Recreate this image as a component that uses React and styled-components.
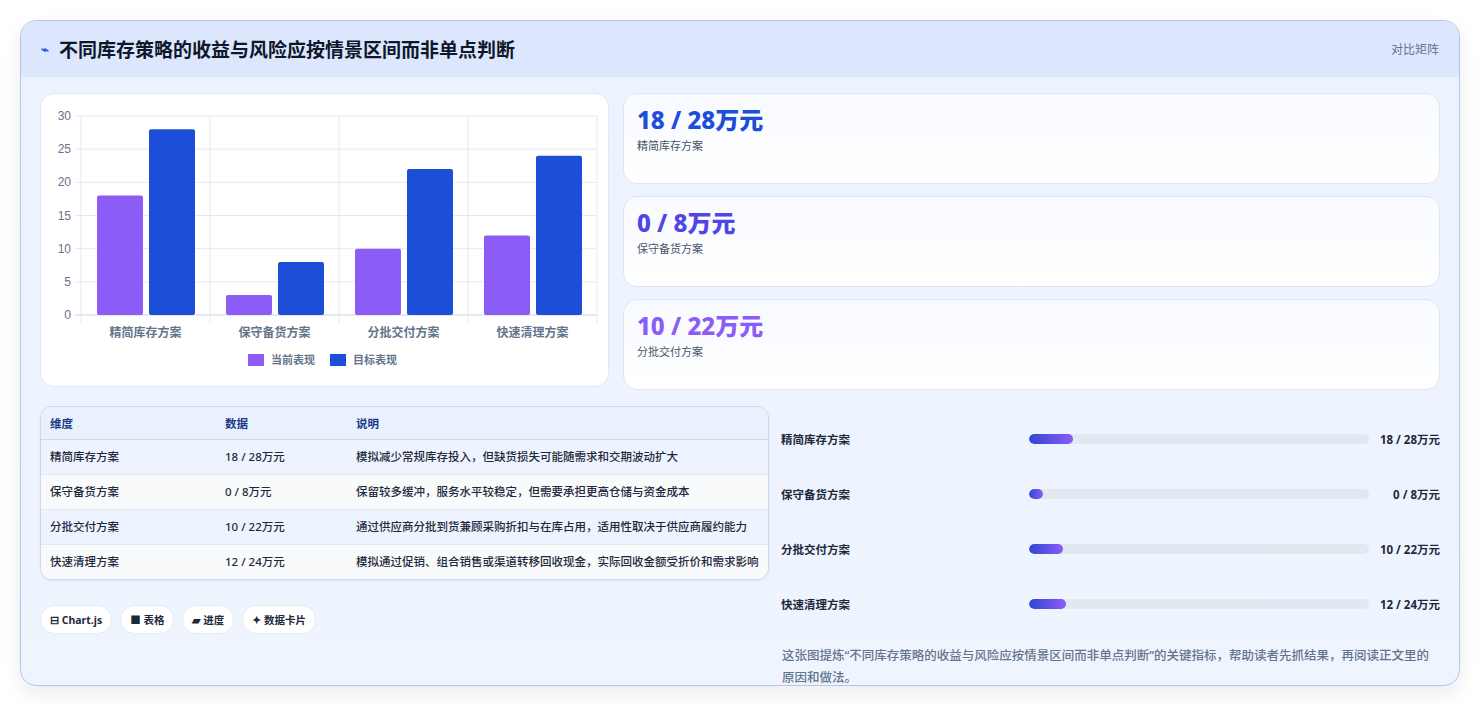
import React from "react";
import styled, { createGlobalStyle } from "styled-components";

const Global = createGlobalStyle`
  body { margin: 0; background: #fff; font-family: "Noto Sans", "Noto Sans CJK SC", sans-serif; }
`;
const Page = styled.div`padding: 20px 20px 20px 20px; height: 706px; box-sizing: border-box;`;
const Shell = styled.div`
  border: 1px solid #b7c3ec; border-radius: 16px; overflow: hidden;
  background: linear-gradient(180deg, #ecf2ff, #eff5ff);
  box-shadow: 0 8px 20px rgba(15,23,42,0.08);
  height: 666px; box-sizing: border-box;
`;
const Header = styled.div`
  height: 56px; background: #dce7fd; display: flex; align-items: center;
  justify-content: space-between; padding: 0 20px;
`;
const Title = styled.h1`
  margin: 0; font-size: 19px; font-weight: 700; color: #0f172a; display: flex; align-items: center; gap: 10px;
  span { color: #2b4fd8; font-size: 13px; }
`;
const Tag = styled.div`font-size: 12px; color: #64748b;`;
const Body = styled.div`padding: 16px 19px 0 19px; display: flex; flex-direction: column;`;
const TopRow = styled.div`display: grid; grid-template-columns: 569px 1fr; gap: 14px;`;
const ChartCard = styled.div`
  background: #fff; border: 1px solid #e1e8f5; border-radius: 14px; height: 294px; box-sizing: border-box;
`;
const Cards = styled.div`display: flex; flex-direction: column; gap: 12px;`;
const Stat = styled.div`
  height: 91px; box-sizing: border-box; border: 1px solid #dde6f6; border-radius: 14px;
  background: linear-gradient(180deg, #f8faff, #fff); padding: 10px 13px;
`;
const StatValue = styled.div`font-size: 24px; font-weight: 800; color: ${p => p.c}; line-height: 32px;`;
const StatLabel = styled.div`font-size: 11px; color: #475569; margin-top: 1px;`;
const BottomRow = styled.div`display: grid; grid-template-columns: 729px 1fr; gap: 12px; margin-top: 16px;`;
const Left = styled.div`display: flex; flex-direction: column;`;
const Table = styled.table`
  width: 100%; border-collapse: separate; border-spacing: 0; font-size: 11.5px; color: #1e293b;
  border: 1px solid #cdd7ee; border-radius: 12px; overflow: hidden;
  box-shadow: 0 1px 3px rgba(15,23,42,0.06);
  th { text-align: left; font-weight: 700; color: #1e3a8a; background: #eaf1fe; height: 32px; padding: 0 9px; border-bottom: 1px solid #cfd9ee; }
  td { padding: 8px 9px; line-height: 18px; vertical-align: top; border-bottom: 1px solid #e2e8f0; font-weight: 500; }
  tr:nth-child(odd) td { background: #eef4ff; }
  tr:nth-child(even) td { background: #f8fafc; }
  tr:last-child td { border-bottom: none; }
`;
const Chips = styled.div`display: flex; gap: 8px; margin-top: 25px;`;
const Chip = styled.div`
  height: 27px; padding: 0 9px; border-radius: 14px; background: #fff; border: 1px solid #e5eaf3;
  font-size: 10.5px; font-weight: 700; color: #1e293b; display: flex; align-items: center; gap: 3px;
`;
const Right = styled.div`display: flex; flex-direction: column; padding-top: 5px;`;
const PRow = styled.div`
  height: 55px; display: grid; grid-template-columns: 248px 340px 1fr; align-items: center;
  font-size: 11.5px; font-weight: 700; color: #1e293b;
`;
const Track = styled.div`height: 10px; border-radius: 5px; background: #e2e8f0; overflow: hidden;`;
const Fill = styled.div`height: 100%; border-radius: 5px; background: linear-gradient(90deg, #3146d6, #8b5cf6);`;
const PVal = styled.div`text-align: right;`;
const Caption = styled.p`margin: 14px 0 0 1px; font-size: 12.5px; line-height: 22px; color: #64748b; font-weight: 500;`;

const cats = ["精简库存方案", "保守备货方案", "分批交付方案", "快速清理方案"];
const cur = [18, 3, 10, 12];
const tgt = [28, 8, 22, 24];

function Chart() {
  const x0 = 40, x1 = 556, y0 = 221, k = 199 / 30, w = 129;
  return (
    <svg width="567" height="292" style={{ display: "block" }}>
      {[0, 5, 10, 15, 20, 25, 30].map(v => (
        <g key={v}>
          <line x1={x0 - 6} x2={x1} y1={y0 - v * k} y2={y0 - v * k} stroke={v === 0 ? "#cbd5e1" : "#e5e9f0"} />
          <text x={30} y={y0 - v * k + 4} fontSize="12" fill="#64748b" textAnchor="end" fontFamily="Liberation Sans">{v}</text>
        </g>
      ))}
      {[0, 1, 2, 3, 4].map(i => (
        <line key={i} x1={x0 + i * w} x2={x0 + i * w} y1={22} y2={y0 + 8} stroke="#e5e9f0" />
      ))}
      {cats.map((c, i) => (
        <g key={c}>
          <rect x={x0 + i * w + 16} y={y0 - cur[i] * k} width={46} height={cur[i] * k} rx="2" fill="#8b5cf6" />
          <rect x={x0 + i * w + 68} y={y0 - tgt[i] * k} width={46} height={tgt[i] * k} rx="2" fill="#1d4ed8" />
          <text x={x0 + i * w + w / 2} y={243} fontSize="12" fontWeight="700" fill="#64748b" textAnchor="middle">{c}</text>
        </g>
      ))}
      <rect x={207} y={260} width={16} height={12} fill="#8b5cf6" />
      <text x={230} y={270} fontSize="11" fontWeight="700" fill="#64748b">当前表现</text>
      <rect x={289} y={260} width={16} height={12} fill="#1d4ed8" />
      <text x={312} y={270} fontSize="11" fontWeight="700" fill="#64748b">目标表现</text>
    </svg>
  );
}

const rows = [
  ["精简库存方案", "18 / 28万元", "模拟减少常规库存投入，但缺货损失可能随需求和交期波动扩大", 13],
  ["保守备货方案", "0 / 8万元", "保留较多缓冲，服务水平较稳定，但需要承担更高仓储与资金成本", 4],
  ["分批交付方案", "10 / 22万元", "通过供应商分批到货兼顾采购折扣与在库占用，适用性取决于供应商履约能力", 10],
  ["快速清理方案", "12 / 24万元", "模拟通过促销、组合销售或渠道转移回收现金，实际回收金额受折价和需求影响", 11],
];

export default function App() {
  return (
    <>
      <Global />
      <Page>
        <Shell>
          <Header>
            <Title><span>⌁</span>不同库存策略的收益与风险应按情景区间而非单点判断</Title>
            <Tag>对比矩阵</Tag>
          </Header>
          <Body>
            <TopRow>
              <ChartCard><Chart /></ChartCard>
              <Cards>
                <Stat><StatValue c="#1d4ed8">18 / 28万元</StatValue><StatLabel>精简库存方案</StatLabel></Stat>
                <Stat><StatValue c="#4f46e5">0 / 8万元</StatValue><StatLabel>保守备货方案</StatLabel></Stat>
                <Stat><StatValue c="#8b5cf6">10 / 22万元</StatValue><StatLabel>分批交付方案</StatLabel></Stat>
              </Cards>
            </TopRow>
            <BottomRow>
              <Left>
                <Table>
                  <colgroup><col style={{ width: 175 }} /><col style={{ width: 131 }} /><col /></colgroup>
                  <thead><tr><th>维度</th><th>数据</th><th>说明</th></tr></thead>
                  <tbody>
                    {rows.map(r => (<tr key={r[0]}><td>{r[0]}</td><td>{r[1]}</td><td>{r[2]}</td></tr>))}
                  </tbody>
                </Table>
                <Chips>
                  <Chip>⊟ Chart.js</Chip>
                  <Chip>■ 表格</Chip>
                  <Chip>▰ 进度</Chip>
                  <Chip>✦ 数据卡片</Chip>
                </Chips>
              </Left>
              <Right>
                {rows.map(r => (
                  <PRow key={r[0]}>
                    <div>{r[0]}</div>
                    <Track><Fill style={{ width: `${r[3]}%` }} /></Track>
                    <PVal>{r[1]}</PVal>
                  </PRow>
                ))}
                <Caption>这张图提炼“不同库存策略的收益与风险应按情景区间而非单点判断”的关键指标，帮助读者先抓结果，再阅读正文里的原因和做法。</Caption>
              </Right>
            </BottomRow>
          </Body>
        </Shell>
      </Page>
    </>
  );
}
